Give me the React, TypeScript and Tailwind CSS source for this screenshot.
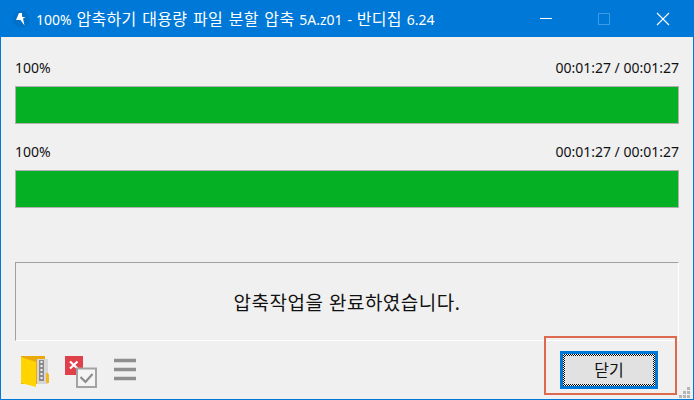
import React from "react";

const font = "font-['Noto_Sans','Noto_Sans_CJK_KR',sans-serif]";

function ProgressRow({ className }: { className?: string }) {
  return (
    <div className={className}>
      <div className="flex h-[20px] items-center justify-between text-[14px] leading-[20px] text-[#111]">
        <span>100%</span>
        <span>00:01:27 / 00:01:27</span>
      </div>
      <div className="mt-[8px] h-[38px] border border-[#b0b0b0] bg-[#06b025]" />
    </div>
  );
}

// hangul sits larger than the latin text in the title
function Ko({ children }: { children: React.ReactNode }) {
  return <span className="text-[16px] tracking-[0.3px]">{children}</span>;
}

function TitleBar() {
  return (
    <div className="flex h-[37px] items-center bg-[#0078d7] text-white">
      <svg width="18" height="18" viewBox="0 0 18 18" className="ml-[11px]">
        <circle cx="9" cy="9" r="8.5" fill="#0070c9" />
        <path d="M7 3 L4 10 L8.5 10 L12.5 15.5 L11 8.5 L13.5 7.5 L10 6.8 L10 3 Z" fill="#fff" />
      </svg>
      <span className="ml-[6px] whitespace-nowrap text-[14px] [word-spacing:1.2px]">
        100% <Ko>압축하기 대용량 파일 분할 압축</Ko> 5A.z01 - <Ko>반디집</Ko> 6.24
      </span>
      <div className="ml-auto flex h-full items-center">
        <svg width="46" height="37" viewBox="0 0 46 37">
          <path d="M17 18.5 H29" stroke="#fff" strokeWidth="1" />
        </svg>
        <svg width="46" height="37" viewBox="0 0 46 37" className="ml-[12px]">
          <rect x="17.5" y="13.5" width="11" height="11" fill="none" stroke="#3d9be6" />
        </svg>
        <svg width="46" height="37" viewBox="0 0 46 37" className="ml-[13px] mr-[7px]">
          <path d="M17 13 L29 25 M29 13 L17 25" stroke="#fff" strokeWidth="1.1" />
        </svg>
      </div>
    </div>
  );
}

function FolderIcon() {
  return (
    <svg width="30" height="32" viewBox="0 0 30 32">
      <path d="M1 0 H25 V28 H1 Z" fill="#eaa90f" />
      <rect x="17" y="3" width="11" height="25" fill="#d6d6d6" />
      <rect x="19" y="4" width="5" height="21" fill="#8a8a8a" />
      <path d="M21.5 5 V24" stroke="#eee" strokeWidth="2" strokeDasharray="2 2" />
      <path d="M26 17 H28 L29 19 V27 H26 Z" fill="#f2b81e" />
      <path d="M1 1 L16 6 V31 L1 27 Z" fill="#ffd400" />
    </svg>
  );
}

function CheckIcon() {
  return (
    <svg width="34" height="32" viewBox="0 0 34 32">
      <rect x="0" y="0" width="18" height="19" fill="#e0404a" />
      <path d="M5 5.5 L12.5 12.5 M12.5 5.5 L5 12.5" stroke="#fff" strokeWidth="2.2" />
      <rect x="12" y="12.5" width="19" height="18.5" fill="#f4f4f4" stroke="#a3a3a3" strokeWidth="2" />
      <path d="M15.5 21 L20.5 26 L27.5 18" fill="none" stroke="#8c8c8c" strokeWidth="2.2" />
    </svg>
  );
}

function MenuIcon() {
  return (
    <svg width="24" height="24" viewBox="0 0 24 24">
      <path d="M1 2.5 H23 M1 11.5 H23 M1 20.5 H23" stroke="#8f8f8f" strokeWidth="3.4" />
    </svg>
  );
}

export default function App() {
  return (
    <div className={`relative flex h-[400px] w-[694px] flex-col overflow-hidden border-x border-b border-[#0078d7] bg-[#f0f0f0] ${font}`}>
      <TitleBar />
      <div className="flex flex-1 flex-col pl-[14px] pr-[14px]">
        <ProgressRow className="mt-[21px]" />
        <ProgressRow className="mt-[18px]" />
        <div className="mt-[54px] flex h-[79px] items-center justify-center border border-[#a0a0a0] border-r-white border-b-white pt-[3px] text-[19px] tracking-[0.5px] text-[#111]">
          압축작업을 완료하였습니다.
        </div>
      </div>
      <div className="flex h-[58px] items-start pl-[19px] pr-[19px] pt-[15px]">
        <FolderIcon />
        <div className="ml-[15px]"><CheckIcon /></div>
        <div className="ml-[14px] mt-[2px]"><MenuIcon /></div>
        <button className="ml-auto mr-[16px] mt-[-5px] h-[38px] w-[98px] border-[3px] border-[#0078d7] bg-[repeating-conic-gradient(#000_0_25%,#fff_0_50%)] bg-[length:2px_2px] p-[2px] text-[16px] text-[#111]">
          <span className="flex h-full w-full items-center justify-center bg-[#e1e1e1]">닫기</span>
        </button>
      </div>
      <div className="absolute left-[543px] top-[336px] h-[59px] w-[133px] border-[2px] border-[#dd6a4f]" />
      <svg width="14" height="12" viewBox="0 0 14 12" className="absolute bottom-[1px] right-[1px]">
        <path d="M9 1 h3 v3 h-3 Z M5 5 h3 v3 h-3 Z M9 5 h3 v3 h-3 Z M1 9 h3 v3 h-3 Z M5 9 h3 v3 h-3 Z M9 9 h3 v3 h-3 Z" fill="#b5b5b5" />
      </svg>
    </div>
  );
}
